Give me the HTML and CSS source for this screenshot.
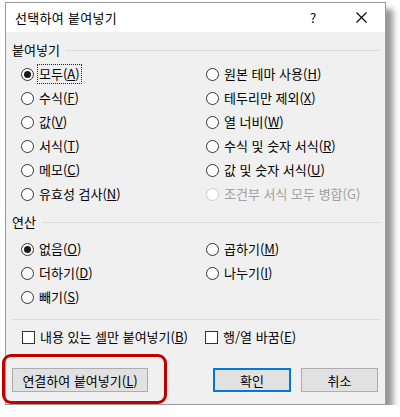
FILE: index.html
```html
<!DOCTYPE html>
<html lang="ko">
<head>
<meta charset="utf-8">
<title>선택하여 붙여넣기</title>
<link rel="stylesheet" href="styles.css">
</head>
<body>
<div class="dialog">
  <div class="titlebar">
    <span class="title">선택하여 붙여넣기</span>
    <span class="help">?</span>
    <span class="close"><svg width="11" height="11" viewBox="0 0 11 11"><path d="M0.5 0.5 L10.5 10.5 M10.5 0.5 L0.5 10.5" stroke="#000" stroke-width="1.1" fill="none"/></svg></span>
  </div>
  <div class="body">
    <div class="group-head"><span class="group-label">붙여넣기</span><span class="rule"></span></div>
    <div class="options paste">
      <div class="opt"><span class="radio on"></span><span class="txt focus">모두(<u>A</u>)</span></div>
      <div class="opt"><span class="radio"></span><span class="txt">원본 테마 사용(<u>H</u>)</span></div>
      <div class="opt"><span class="radio"></span><span class="txt">수식(<u>F</u>)</span></div>
      <div class="opt"><span class="radio"></span><span class="txt">테두리만 제외(<u>X</u>)</span></div>
      <div class="opt"><span class="radio"></span><span class="txt">값(<u>V</u>)</span></div>
      <div class="opt"><span class="radio"></span><span class="txt">열 너비(<u>W</u>)</span></div>
      <div class="opt"><span class="radio"></span><span class="txt">서식(<u>T</u>)</span></div>
      <div class="opt"><span class="radio"></span><span class="txt">수식 및 숫자 서식(<u>R</u>)</span></div>
      <div class="opt"><span class="radio"></span><span class="txt">메모(<u>C</u>)</span></div>
      <div class="opt"><span class="radio"></span><span class="txt">값 및 숫자 서식(<u>U</u>)</span></div>
      <div class="opt"><span class="radio"></span><span class="txt">유효성 검사(<u>N</u>)</span></div>
      <div class="opt disabled"><span class="radio"></span><span class="txt">조건부 서식 모두 병합(G)</span></div>
    </div>
    <div class="group-head ops-head"><span class="group-label">연산</span><span class="rule"></span></div>
    <div class="options ops">
      <div class="opt"><span class="radio on"></span><span class="txt">없음(<u>O</u>)</span></div>
      <div class="opt"><span class="radio"></span><span class="txt">곱하기(<u>M</u>)</span></div>
      <div class="opt"><span class="radio"></span><span class="txt">더하기(<u>D</u>)</span></div>
      <div class="opt"><span class="radio"></span><span class="txt">나누기(<u>I</u>)</span></div>
      <div class="opt"><span class="radio"></span><span class="txt">빼기(<u>S</u>)</span></div>
    </div>
    <div class="separator"></div>
    <div class="checks">
      <div class="opt"><span class="checkbox"></span><span class="txt">내용 있는 셀만 붙여넣기(<u>B</u>)</span></div>
      <div class="opt"><span class="checkbox"></span><span class="txt">행/열 바꿈(<u>E</u>)</span></div>
    </div>
    <div class="buttons">
      <button class="btn link-btn">연결하여 붙여넣기(<u>L</u>)</button>
      <div class="btn-group">
        <button class="btn ok">확인</button>
        <button class="btn cancel">취소</button>
      </div>
    </div>
  </div>
  <div class="highlight"></div>
</div>
</body>
</html>
```
FILE: styles.css
```css
html, body {
  margin: 0;
  padding: 0;
  background: #ffffff;
}
body {
  font-family: "Noto Sans CJK KR", "Noto Sans", sans-serif;
  font-size: 13px;
  color: #000;
}
.dialog {
  position: relative;
  box-sizing: border-box;
  width: 381px;
  height: 403px;
  margin: 2px 0 0 5px;
  border: 1px solid #9a9a9a;
  background: #f0f0f0;
  box-shadow: 7px 7px 6px rgba(0,0,0,0.42);
}
.titlebar {
  display: flex;
  align-items: center;
  height: 29px;
  background: #ffffff;
  padding-left: 9px;
}
.title {
  flex: 1;
  font-size: 13px;
  letter-spacing: 0.3px;
}
.help {
  font-size: 13px;
  width: 14px;
  margin-right: 32px;
}
.close {
  display: flex;
  width: 11px;
  margin-right: 18px;
}
.body {
  padding: 10px 5px 0 6px;
}
.group-head {
  display: flex;
  align-items: center;
  height: 16px;
}
.group-label {
  line-height: 16px;
  margin-right: 6px;
}
.rule {
  flex: 1;
  height: 1px;
  background: #dcdcdc;
}
.options {
  display: grid;
  grid-template-columns: 185px 1fr;
  grid-auto-rows: 24px;
  margin-left: 9px;
}
.paste {
  margin-top: 4px;
}
.ops-head {
  margin-top: 8px;
}
.ops {
  margin-top: 7px;
}
.opt {
  display: flex;
  align-items: center;
}
.txt {
  line-height: 16px;
  padding: 1px;
  border: 1px dotted transparent;
}
.txt.focus {
  border-color: #222;
}
.radio {
  box-sizing: border-box;
  width: 13px;
  height: 13px;
  border: 1px solid #333;
  border-radius: 50%;
  background: #fff;
  margin-right: 3px;
  display: flex;
  align-items: center;
  justify-content: center;
  flex: none;
}
.radio.on::after {
  content: "";
  width: 7px;
  height: 7px;
  border-radius: 50%;
  background: #1a1a1a;
}
.disabled .radio {
  border-color: #cccccc;
}
.disabled .txt {
  color: #a0a0a0;
}
.separator {
  height: 1px;
  background: #dcdcdc;
  margin-top: 10px;
}
.checks {
  display: grid;
  grid-template-columns: 183px 1fr;
  height: 24px;
  margin-top: 5px;
  margin-left: 10px;
}
.checkbox {
  box-sizing: border-box;
  width: 13px;
  height: 13px;
  border: 1px solid #333;
  background: #fff;
  margin-right: 3px;
  flex: none;
}
.buttons {
  display: flex;
  justify-content: space-between;
  margin-top: 19px;
  margin-right: 2px;
}
.btn-group {
  display: flex;
  gap: 10px;
}
.btn {
  box-sizing: border-box;
  height: 24px;
  font-family: "Noto Sans CJK KR", "Noto Sans", sans-serif;
  font-size: 13px;
  color: #000;
  background: #e1e1e1;
  border: 1px solid #adadad;
  padding: 0;
  margin: 0;
}
.link-btn {
  width: 136px;
}
.ok {
  width: 78px;
  border: 2px solid #0078d7;
}
.cancel {
  width: 77px;
}
.highlight {
  position: absolute;
  left: -4px;
  top: 351px;
  width: 165px;
  height: 50px;
  box-sizing: border-box;
  border: 3px solid #c00000;
  border-radius: 9px;
}
```
